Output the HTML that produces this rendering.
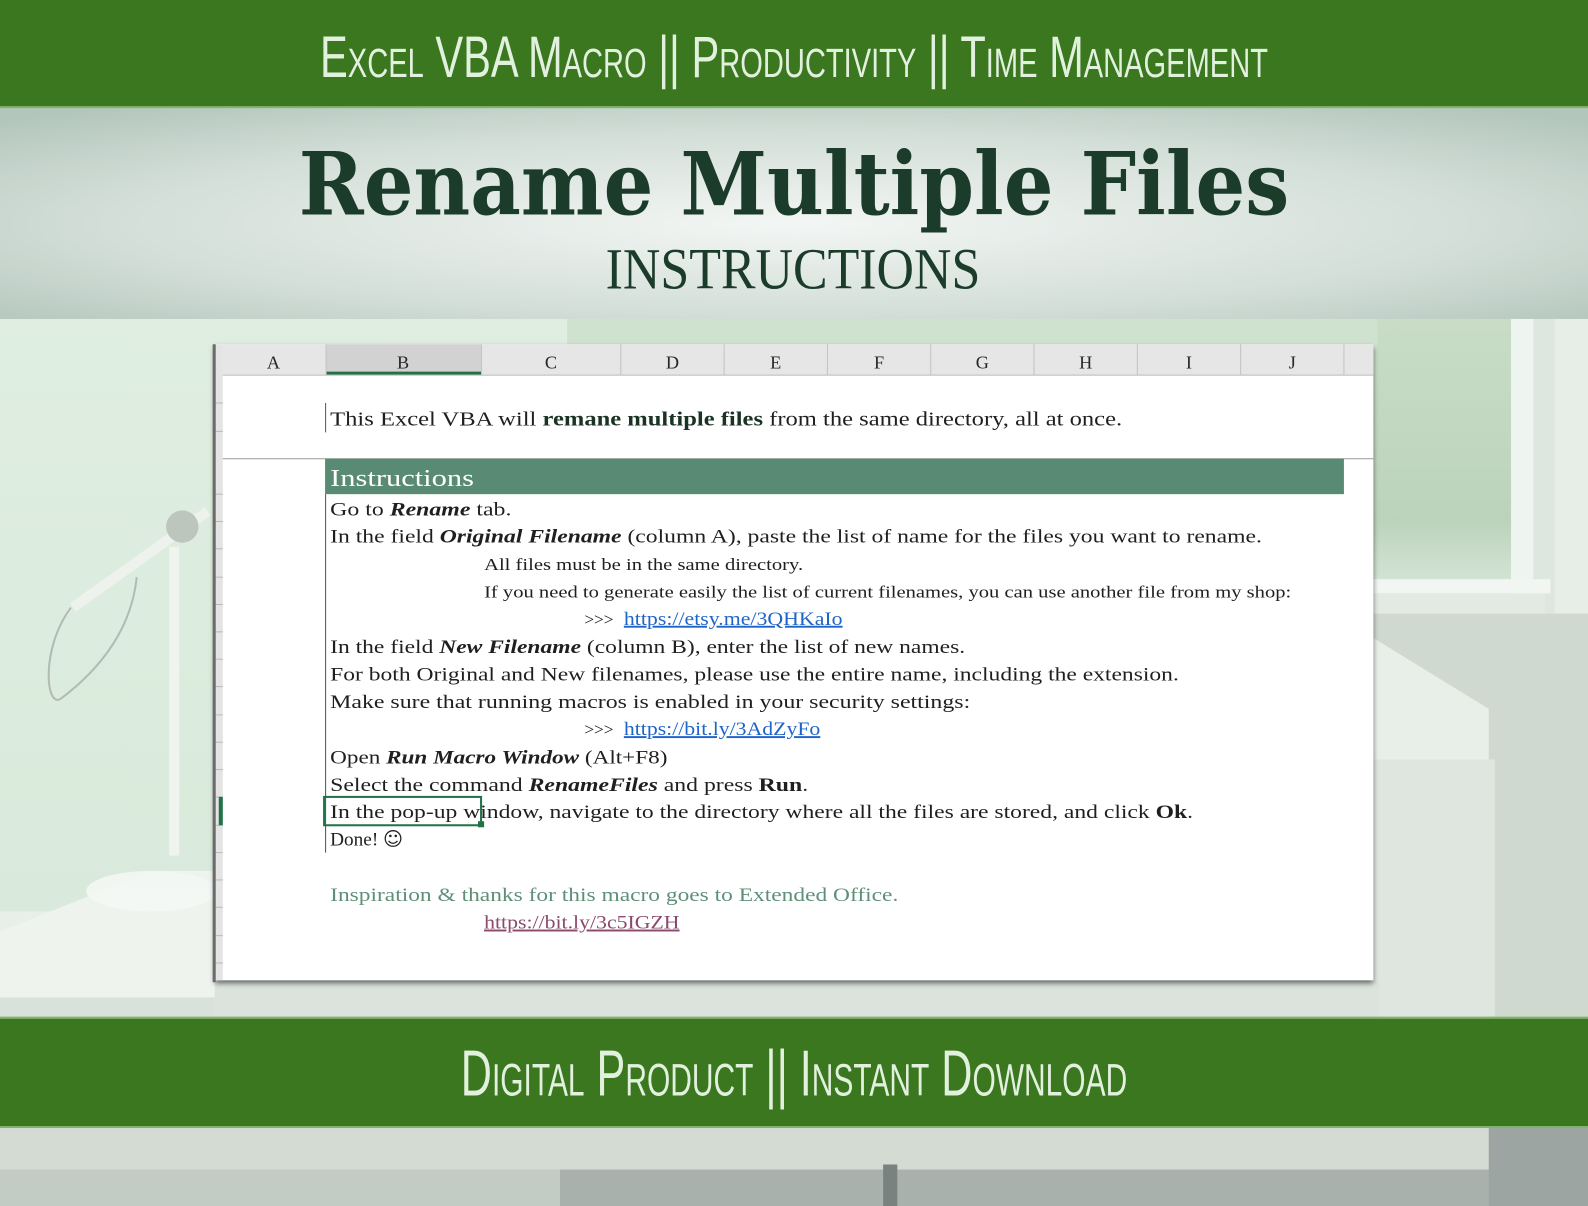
<!DOCTYPE html>
<html><head><meta charset="utf-8"><style>
html,body{margin:0;padding:0;width:1588px;height:1206px;overflow:hidden;background:#dfe9e0}
svg{display:block}
.s{font-family:"Liberation Serif",serif}
</style></head><body>
<svg width="1588" height="1206" viewBox="0 0 1568 1191" preserveAspectRatio="none" xmlns="http://www.w3.org/2000/svg">
<defs>
<radialGradient id="ban" cx="0.5" cy="0.55" r="0.7">
<stop offset="0" stop-color="#f3f6f4"/><stop offset="0.6" stop-color="#d4dfd9"/><stop offset="1" stop-color="#b3c6bc"/>
</radialGradient>
<linearGradient id="glass" x1="0" y1="0" x2="0" y2="1">
<stop offset="0" stop-color="#c9ddc6"/><stop offset="0.5" stop-color="#bcd3bb"/><stop offset="0.75" stop-color="#e4efe6"/><stop offset="1" stop-color="#cfe0cf"/>
</linearGradient>
<linearGradient id="leftbg" x1="0" y1="0" x2="0" y2="1">
<stop offset="0" stop-color="#e2f0e3"/><stop offset="1" stop-color="#d6e8d9"/>
</linearGradient>
<filter id="sh" x="-5%" y="-5%" width="110%" height="110%"><feDropShadow dx="0" dy="3" stdDeviation="2.5" flood-color="#000" flood-opacity="0.55"/></filter>
</defs>
<!-- background -->
<rect x="0" y="0" width="1568" height="1191" fill="url(#leftbg)"/>
<rect x="0" y="900" width="220" height="110" fill="#e8efe8"/>
<polygon points="0,920 150,860 220,860 220,1010 0,1010" fill="#eef3ee"/>
<rect x="0" y="985" width="220" height="25" fill="#d9e2da"/>
<!-- lamp -->
<g opacity="0.85">
<line x1="172" y1="540" x2="172" y2="845" stroke="#f3f6f2" stroke-width="10"/>
<line x1="72" y1="600" x2="205" y2="505" stroke="#f1f4ef" stroke-width="10"/>
<circle cx="180" cy="520" r="16" fill="#b8c0b8"/>
<ellipse cx="150" cy="880" rx="65" ry="20" fill="#f5f8f4"/>
<path d="M70 600 C40 640 45 700 60 690 C100 660 130 620 135 570" fill="none" stroke="#a9b3ab" stroke-width="2"/>
</g>
<!-- right area -->
<rect x="1356" y="315" width="212" height="690" fill="#dde7df"/>
<rect x="1356" y="315" width="140" height="400" fill="url(#glass)"/>
<rect x="1492" y="315" width="22" height="405" fill="#eef4ef"/>
<rect x="1356" y="572" width="175" height="14" fill="#f1f6f2"/>
<rect x="1356" y="586" width="170" height="20" fill="#e2eae3"/>
<rect x="1535" y="315" width="33" height="300" fill="#e6eee7"/>
<rect x="1356" y="606" width="212" height="400" fill="#cfd9d0"/>
<polygon points="1356,630 1470,700 1470,1006 1356,1006" fill="#e8eee8"/>
<rect x="1356" y="750" width="120" height="256" fill="#dfe6df"/>
<!-- background strip behind window top -->
<rect x="560" y="315" width="800" height="30" fill="#cfe2cf"/>
<rect x="212" y="968" width="1150" height="40" fill="#dbe3dc"/>
<!-- bottom area -->
<rect x="0" y="1112" width="1568" height="79" fill="#d3dbd3"/>
<rect x="0" y="1155" width="560" height="36" fill="#c2ccc4"/>
<rect x="553" y="1155" width="1017" height="36" fill="#a9b1ad"/>
<rect x="1470" y="1112" width="98" height="79" fill="#9da5a2"/>
<rect x="872" y="1150" width="14" height="41" fill="#7a827f"/>

<!-- top bar -->
<rect x="0" y="0" width="1568" height="105" fill="#3a771f"/>
<rect x="0" y="105" width="1568" height="2" fill="#7fb26a"/>
<text x="316" y="76" textLength="936" lengthAdjust="spacingAndGlyphs" fill="#e2f0de" font-family="'Liberation Sans Narrow','Liberation Sans',sans-serif" font-size="58" style="font-variant:small-caps">Excel VBA Macro || Productivity || Time Management</text>
<!-- banner -->
<rect x="0" y="107" width="1568" height="208" fill="url(#ban)"/>
<text x="295" y="212" textLength="978" lengthAdjust="spacingAndGlyphs" fill="#1b3b2b" font-family="'DejaVu Serif',serif" font-weight="bold" font-size="86">Rename Multiple Files</text>
<text x="598" y="285" textLength="370" lengthAdjust="spacingAndGlyphs" fill="#1b3b2b" class="s" font-size="58">INSTRUCTIONS</text>

<!-- sheet -->
<g filter="url(#sh)">
<rect x="212" y="340" width="1144" height="628" fill="#ffffff"/>
</g>
<rect x="212" y="340" width="8" height="628" fill="#e4e4e4"/>
<g stroke="#b9b9b9" stroke-width="1">
<line x1="212" y1="398" x2="220" y2="398"/><line x1="212" y1="426" x2="220" y2="426"/>
<line x1="212" y1="488" x2="220" y2="488"/><line x1="212" y1="515" x2="220" y2="515"/>
<line x1="212" y1="542" x2="220" y2="542"/><line x1="212" y1="570" x2="220" y2="570"/>
<line x1="212" y1="597" x2="220" y2="597"/><line x1="212" y1="624" x2="220" y2="624"/>
<line x1="212" y1="651" x2="220" y2="651"/><line x1="212" y1="678" x2="220" y2="678"/>
<line x1="212" y1="706" x2="220" y2="706"/><line x1="212" y1="733" x2="220" y2="733"/>
<line x1="212" y1="760" x2="220" y2="760"/><line x1="212" y1="787" x2="220" y2="787"/>
<line x1="212" y1="815" x2="220" y2="815"/><line x1="212" y1="842" x2="220" y2="842"/>
<line x1="212" y1="869" x2="220" y2="869"/><line x1="212" y1="896" x2="220" y2="896"/>
<line x1="212" y1="924" x2="220" y2="924"/><line x1="212" y1="951" x2="220" y2="951"/>
</g>
<rect x="216" y="787" width="4" height="28" fill="#217346"/>
<rect x="210" y="340" width="3" height="630" fill="#6b6b6b"/>
<!-- header -->
<rect x="220" y="340" width="1136" height="30" fill="#e6e6e6"/>
<rect x="322" y="340" width="153" height="30" fill="#d2d2d2"/>
<rect x="322" y="367" width="153" height="3" fill="#217346"/>
<line x1="220" y1="370.5" x2="1356" y2="370.5" stroke="#b8b8b8"/>
<g stroke="#c2c2c2">
<line x1="322" y1="340" x2="322" y2="370"/><line x1="475.5" y1="340" x2="475.5" y2="370"/>
<line x1="613" y1="340" x2="613" y2="370"/><line x1="715" y1="340" x2="715" y2="370"/>
<line x1="817" y1="340" x2="817" y2="370"/><line x1="919" y1="340" x2="919" y2="370"/>
<line x1="1021" y1="340" x2="1021" y2="370"/><line x1="1123" y1="340" x2="1123" y2="370"/>
<line x1="1225" y1="340" x2="1225" y2="370"/><line x1="1327" y1="340" x2="1327" y2="370"/>
</g>
<g class="s" font-size="18" fill="#262626" text-anchor="middle">
<text x="270" y="364">A</text><text x="398" y="364">B</text><text x="544" y="364">C</text>
<text x="664" y="364">D</text><text x="766" y="364">E</text><text x="868" y="364">F</text>
<text x="970" y="364">G</text><text x="1072" y="364">H</text><text x="1174" y="364">I</text><text x="1276" y="364">J</text>
</g>
<!-- row 1 -->
<line x1="321.5" y1="398" x2="321.5" y2="427" stroke="#555"/>
<text x="326" y="420" textLength="782" lengthAdjust="spacingAndGlyphs" class="s" font-size="20" fill="#1f1f1f">This Excel VBA will <tspan font-weight="bold" fill="#1b3324">remane multiple files</tspan> from the same directory, all at once.</text>
<line x1="220" y1="453" x2="1356" y2="453" stroke="#9a9a9a"/>
<!-- instructions bar -->
<rect x="321" y="453" width="1006" height="35" fill="#588a74"/>
<text x="326" y="480" class="s" font-size="24" fill="#ffffff" textLength="142" lengthAdjust="spacingAndGlyphs">Instructions</text>
<line x1="321.5" y1="488" x2="321.5" y2="842" stroke="#3a5a46"/>
<g class="s" font-size="19" fill="#1f1f1f">
<text x="326" y="509" textLength="179" lengthAdjust="spacingAndGlyphs">Go to <tspan font-weight="bold" font-style="italic">Rename</tspan>  tab.</text>
<text x="326" y="536" textLength="920" lengthAdjust="spacingAndGlyphs">In the field <tspan font-weight="bold" font-style="italic">Original Filename</tspan>  (column A), paste the list of name for the files you want to rename.</text>
<text x="478" y="563" textLength="315" lengthAdjust="spacingAndGlyphs" font-size="17">All files must be in the same directory.</text>
<text x="478" y="590" textLength="797" lengthAdjust="spacingAndGlyphs" font-size="17">If you need to generate easily the list of current filenames, you can use another file from my shop:</text>
<text x="577" y="617" font-size="17">&gt;&gt;&gt;</text>
<text x="616" y="617" textLength="216" lengthAdjust="spacingAndGlyphs" fill="#1f64c8" text-decoration="underline">https://etsy.me/3QHKaIo</text>
<text x="326" y="645" textLength="627" lengthAdjust="spacingAndGlyphs">In the field <tspan font-weight="bold" font-style="italic">New Filename</tspan>  (column B), enter the list of new names.</text>
<text x="326" y="672" textLength="838" lengthAdjust="spacingAndGlyphs">For both Original and New filenames, please use the entire name, including the extension.</text>
<text x="326" y="699" textLength="632" lengthAdjust="spacingAndGlyphs">Make sure that running macros is enabled in your security settings:</text>
<text x="577" y="726" font-size="17">&gt;&gt;&gt;</text>
<text x="616" y="726" textLength="194" lengthAdjust="spacingAndGlyphs" fill="#1f64c8" text-decoration="underline">https://bit.ly/3AdZyFo</text>
<text x="326" y="754" textLength="333" lengthAdjust="spacingAndGlyphs">Open <tspan font-weight="bold" font-style="italic">Run Macro Window</tspan>  (Alt+F8)</text>
<text x="326" y="781" textLength="472" lengthAdjust="spacingAndGlyphs">Select the command <tspan font-weight="bold" font-style="italic">RenameFiles</tspan>  and press <tspan font-weight="bold">Run</tspan>.</text>
<text x="326" y="808" textLength="852" lengthAdjust="spacingAndGlyphs">In the pop-up window, navigate to the directory where all the files are stored, and click <tspan font-weight="bold">Ok</tspan>.</text>
<text x="326" y="835">Done! <tspan font-family="'DejaVu Sans',sans-serif">☺</tspan></text>
<text x="326" y="890" textLength="561" lengthAdjust="spacingAndGlyphs" fill="#5e8f78">Inspiration &amp; thanks for this macro goes to Extended Office.</text>
<text x="478" y="917" textLength="193" lengthAdjust="spacingAndGlyphs" fill="#8a4a6c" text-decoration="underline">https://bit.ly/3c5IGZH</text>
</g>
<rect x="320" y="787" width="155" height="28" fill="none" stroke="#217346" stroke-width="2"/>
<rect x="472" y="811" width="6" height="6" fill="#217346"/>

<!-- bottom bar -->
<rect x="0" y="1006" width="1568" height="106" fill="#3a771f"/>
<rect x="0" y="1004" width="1568" height="2" fill="#7fb26a"/>
<rect x="0" y="1112" width="1568" height="2" fill="#7fb26a"/>
<text x="455" y="1082" textLength="658" lengthAdjust="spacingAndGlyphs" fill="#e2f0de" font-family="'Liberation Sans Narrow','Liberation Sans',sans-serif" font-size="64" style="font-variant:small-caps">Digital Product || Instant Download</text>
</svg>
</body></html>
